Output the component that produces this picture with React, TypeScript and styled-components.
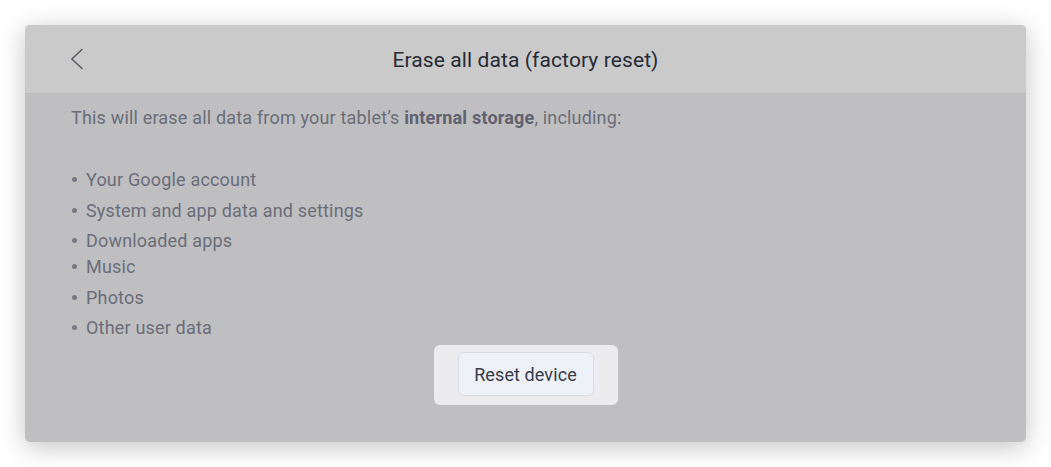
import React from "react";
import styled, { createGlobalStyle } from "styled-components";

const Global = createGlobalStyle`
  html, body { margin: 0; padding: 0; background: #ffffff; }
  body { font-family: Roboto, "Noto Sans", Arial, sans-serif; -webkit-font-smoothing: antialiased; }
`;

const Page = styled.div`
  padding: 25px 25px 25px 25px;
  box-sizing: border-box;
  width: 1051px;
  height: 467px;
`;

const Card = styled.div`
  width: 1001px;
  height: 417px;
  border-radius: 5px;
  overflow: hidden;
  background: #bfbfc1;
  box-shadow: 0 5px 26px rgba(0, 0, 0, 0.24);
  display: flex;
  flex-direction: column;
`;

const Header = styled.div`
  height: 68px;
  flex: 0 0 68px;
  background: #cacaca;
  border-bottom: 1px solid #b9b9b9;
  display: grid;
  grid-template-columns: 80px 1fr 80px;
  align-items: center;
`;

const BackButton = styled.button`
  background: none;
  border: none;
  padding: 0;
  margin-left: 44px;
  width: 16px;
  height: 24px;
  display: flex;
  align-items: center;
  justify-content: center;
  cursor: pointer;
`;

const Title = styled.h1`
  margin: 0;
  text-align: center;
  font-size: 21px;
  font-weight: 400;
  color: #262b36;
  letter-spacing: 0.1px;
  line-height: 24px;
  margin-top: 2px;
`;

const Body = styled.div`
  padding: 12px 46px 0 46px;
  display: flex;
  flex-direction: column;
`;

const Intro = styled.p`
  margin: 0;
  font-size: 18px;
  line-height: 24px;
  color: #6a6d79;
  letter-spacing: 0.18px;
  strong {
    font-weight: 700;
    color: #5f6270;
  }
`;

const List = styled.ul`
  list-style: none;
  margin: 37px 0 0 0;
  padding: 0;
`;

const Item = styled.li<{ $gap: number }>`
  display: flex;
  align-items: center;
  gap: 9px;
  margin-top: ${(p) => p.$gap}px;
  height: 24px;
  font-size: 18px;
  color: #6a6d79;
  letter-spacing: 0.18px;
  &::before {
    content: "";
    width: 5px;
    height: 5px;
    margin-left: 1px;
    border-radius: 50%;
    background: #767985;
    flex: 0 0 5px;
  }
`;

const ActionArea = styled.div`
  align-self: center;
  margin-top: 6px;
  background: #ececee;
  border-radius: 6px;
  padding: 7px 24px 9px 24px;
  display: flex;
`;

const ResetButton = styled.button`
  width: 136px;
  height: 44px;
  box-sizing: border-box;
  background: #eff1f8;
  border: 1px solid #dadce5;
  border-radius: 6px;
  font-family: Roboto, "Noto Sans", Arial, sans-serif;
  font-size: 18px;
  color: #363b4b;
  letter-spacing: 0.1px;
  cursor: pointer;
`;

const items: [string, number][] = [
  ["Your Google account", 0],
  ["System and app data and settings", 7],
  ["Downloaded apps", 6],
  ["Music", 2],
  ["Photos", 7],
  ["Other user data", 6],
];

export default function App() {
  return (
    <>
      <Global />
      <Page>
        <Card>
          <Header>
            <BackButton aria-label="Back">
              <svg width="14" height="22" viewBox="0 0 14 22" fill="none">
                <path d="M12 1.5 L1.8 11 L12 20.5" stroke="#5c5e66" strokeWidth="1.6" strokeLinecap="round" strokeLinejoin="round" />
              </svg>
            </BackButton>
            <Title>Erase all data (factory reset)</Title>
            <div />
          </Header>
          <Body>
            <Intro>
              This will erase all data from your tablet’s <strong>internal storage</strong>, including:
            </Intro>
            <List>
              {items.map(([t, g]) => (
                <Item key={t} $gap={g}>
                  {t}
                </Item>
              ))}
            </List>
            <ActionArea>
              <ResetButton>Reset device</ResetButton>
            </ActionArea>
          </Body>
        </Card>
      </Page>
    </>
  );
}
